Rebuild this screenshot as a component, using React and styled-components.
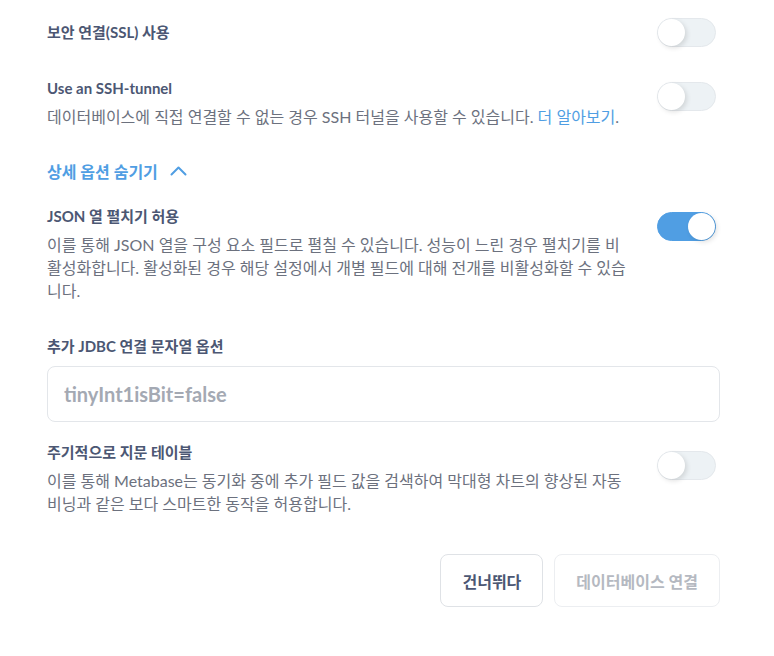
import React, { useState } from "react";
import styled, { createGlobalStyle } from "styled-components";

const GlobalStyle = createGlobalStyle`
  html, body {
    margin: 0;
    padding: 0;
    background: #fff;
  }
  body {
    font-family: Lato, "Noto Sans CJK KR", sans-serif;
    -webkit-font-smoothing: antialiased;
  }
`;

const Page = styled.div`
  width: 673px;
  padding: 18px 0 0 47px;
`;

const Row = styled.div`
  display: flex;
  align-items: flex-start;
  justify-content: space-between;
  margin-top: ${(p) => p.$top || 0}px;
  margin-bottom: ${(p) => p.$gap || 0}px;
`;

const TextCol = styled.div`
  flex: 1;
  max-width: 582px;
  padding-top: ${(p) => p.$pt || 0}px;
`;

const Title = styled.div`
  font-size: 15px;
  font-weight: 700;
  color: #4c5773;
  line-height: 20px;
`;

const Desc = styled.div`
  margin-top: 7px;
  font-size: 16px;
  line-height: 23px;
  color: #6c717e;
`;

const Link = styled.a`
  color: #509ee3;
  text-decoration: none;
`;

const Track = styled.button`
  position: relative;
  flex-shrink: 0;
  width: 59px;
  height: 29px;
  margin: ${(p) => p.$mt || 0}px 4px 0 0;
  padding: 0;
  border-radius: 15px;
  border: 1px solid ${(p) => (p.$on ? "#509ee3" : "#e4e8ec")};
  background: ${(p) => (p.$on ? "#509ee3" : "#edf2f5")};
  cursor: pointer;
`;

const Knob = styled.span`
  position: absolute;
  top: 0;
  left: ${(p) => (p.$on ? "30px" : "0")};
  width: 27px;
  height: 27px;
  border-radius: 50%;
  background: #fff;
  box-shadow: 2px 2px 5px rgba(0, 0, 0, 0.12);
`;

const Toggle = ({ on, mt }) => {
  const [v, setV] = useState(on);
  return (
    <Track $on={v} $mt={mt} onClick={() => setV(!v)}>
      <Knob $on={v} />
    </Track>
  );
};

const Expander = styled.button`
  display: flex;
  align-items: center;
  gap: 12px;
  height: 24px;
  padding: 0;
  margin: 31px 0 23px;
  border: none;
  background: none;
  font-family: inherit;
  font-size: 16px;
  font-weight: 700;
  color: #509ee3;
  cursor: pointer;
`;

const Field = styled.div`
  margin: 34px 0 0;
`;

const Input = styled.input`
  box-sizing: border-box;
  display: block;
  width: 673px;
  height: 56px;
  margin-top: 10px;
  padding: 0 16px;
  border: 1px solid #e3e6ea;
  border-radius: 8px;
  font-family: inherit;
  font-size: 20px;
  font-weight: 700;
  color: #4c5773;
  outline: none;
  &::placeholder {
    color: #a4a9b3;
  }
`;

const Footer = styled.div`
  display: flex;
  justify-content: flex-end;
  gap: 11px;
  margin-top: 39px;
`;

const Button = styled.button`
  height: 53px;
  padding: 0 21px;
  border-radius: 8px;
  border: 1px solid ${(p) => (p.disabled ? "#eceef1" : "#dfe2e6")};
  background: #fff;
  font-family: inherit;
  font-size: 16px;
  font-weight: 700;
  color: ${(p) => (p.disabled ? "#b5b9c1" : "#4c5773")};
  cursor: ${(p) => (p.disabled ? "default" : "pointer")};
`;

export default function App() {
  return (
    <Page>
      <GlobalStyle />
      <Row $gap={31}>
        <TextCol $pt={4}>
          <Title>보안 연결(SSL) 사용</Title>
        </TextCol>
        <Toggle on={false} />
      </Row>

      <Row>
        <TextCol>
          <Title>Use an SSH-tunnel</Title>
          <Desc>
            데이터베이스에 직접 연결할 수 없는 경우 SSH 터널을 사용할 수 있습니다.{" "}
            <Link href="#">더 알아보기</Link>.
          </Desc>
        </TextCol>
        <Toggle on={false} mt={4} />
      </Row>

      <Expander>
        상세 옵션 숨기기
        <svg width="17" height="10" viewBox="0 0 17 10" fill="none">
          <path d="M1.5 8.5 L8.5 1.5 L15.5 8.5" stroke="#509ee3" strokeWidth="2" strokeLinecap="round" strokeLinejoin="round" />
        </svg>
      </Expander>

      <Row>
        <TextCol>
          <Title>JSON 열 펼치기 허용</Title>
          <Desc>
            이를 통해 JSON 열을 구성 요소 필드로 펼칠 수 있습니다. 성능이 느린 경우 펼치기를 비활성화합니다. 활성화된 경우 해당 설정에서 개별 필드에 대해 전개를 비활성화할 수 있습니다.
          </Desc>
        </TextCol>
        <Toggle on={true} mt={6} />
      </Row>

      <Field>
        <Title>추가 JDBC 연결 문자열 옵션</Title>
        <Input placeholder="tinyInt1isBit=false" />
      </Field>

      <Row $top={20}>
        <TextCol>
          <Title>주기적으로 지문 테이블</Title>
          <Desc>
            이를 통해 Metabase는 동기화 중에 추가 필드 값을 검색하여 막대형 차트의 향상된 자동 비닝과 같은 보다 스마트한 동작을 허용합니다.
          </Desc>
        </TextCol>
        <Toggle on={false} mt={9} />
      </Row>

      <Footer>
        <Button>건너뛰다</Button>
        <Button disabled>데이터베이스 연결</Button>
      </Footer>
    </Page>
  );
}
